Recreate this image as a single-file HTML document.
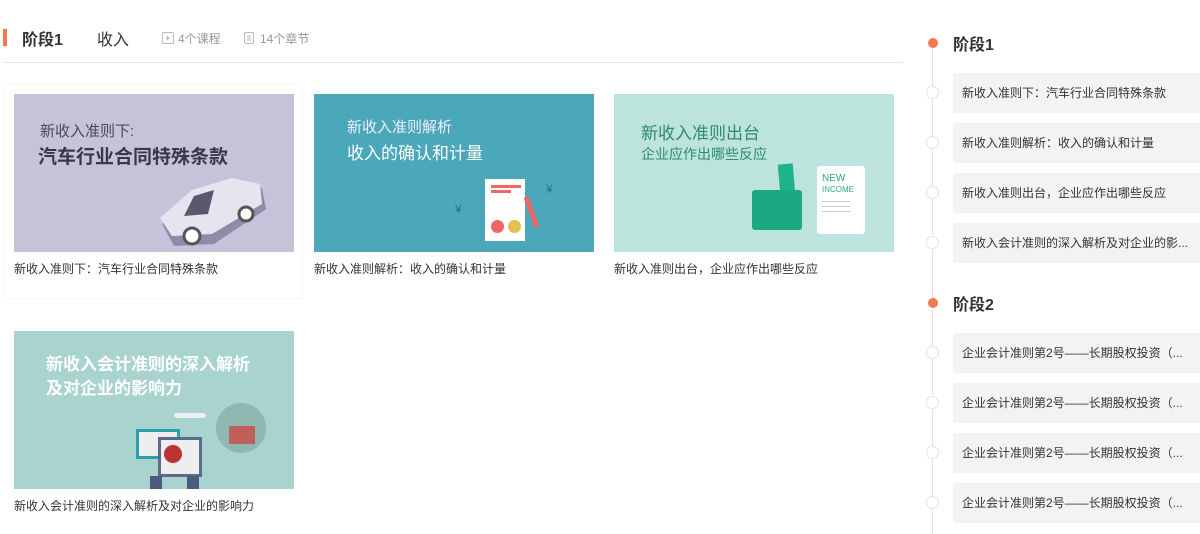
<!DOCTYPE html>
<html><head><meta charset="utf-8"><style>
*{margin:0;padding:0;box-sizing:border-box}
body{width:1200px;height:534px;background:#fff;font-family:"Liberation Sans","Noto Sans CJK SC",sans-serif;position:relative;overflow:hidden;color:#333}
.a{position:absolute}
.cap{position:absolute;font-size:12px;color:#333;white-space:nowrap}
.img{position:absolute;width:280px;height:158px;overflow:hidden}
.t{position:absolute;white-space:nowrap}
.item{position:absolute;left:953px;width:260px;height:40px;background:#f4f3f2;border-radius:3px;font-size:12px;color:#333;line-height:40px;padding-left:9px;white-space:nowrap}
.dot{position:absolute;left:926px;width:13px;height:13px;border:1px solid #e2e2e2;border-radius:50%;background:#fff}
</style></head><body>
<div class="a" style="left:3px;top:29px;width:4px;height:17px;background:#f47a4d"></div>
<div class="t" style="left:22px;top:26px;font-size:16px;font-weight:bold;color:#333">阶段1</div>
<div class="t" style="left:97px;top:26px;font-size:16px;color:#333">收入</div>
<svg class="a" style="left:162px;top:32px" width="12" height="12"><rect x="0.5" y="0.5" width="11" height="11" rx="1.5" fill="none" stroke="#bbb"/><path d="M4.5 3.5L8 6L4.5 8.5Z" fill="#bbb"/></svg>
<div class="t" style="left:178px;top:30px;font-size:12px;color:#999">4个课程</div>
<svg class="a" style="left:244px;top:32px" width="10" height="12"><rect x="0.5" y="0.5" width="9" height="11" rx="1.5" fill="none" stroke="#bbb"/><path d="M3 4h4M3 6h4M3 8h4" stroke="#bbb"/></svg>
<div class="t" style="left:260px;top:30px;font-size:12px;color:#999">14个章节</div>
<div class="a" style="left:3px;top:62px;width:900px;height:1px;background:#e5e5e5"></div>

<div class="a" style="left:3px;top:84px;width:300px;height:215px;border:1px solid #f6f6f6"></div>

<div class="img" style="left:14px;top:94px;background:#c5c3d9">
 <div class="t" style="left:26px;top:26px;font-size:15px;color:#4a4560">新收入准则下:</div>
 <div class="t" style="left:24px;top:48px;font-size:19px;font-weight:bold;color:#3b3550">汽车行业合同特殊条款</div>
 <svg class="a" style="left:140px;top:80px" width="120" height="75"><path d="M8 50 L40 20 L80 8 L108 14 L112 35 L60 70 L20 72Z" fill="#8f8ca8"/><path d="M6 44 L38 16 L78 4 L106 10 L108 30 L58 60 L18 62Z" fill="#e6e5ef"/><path d="M40 22 L60 16 L54 40 L30 42Z" fill="#5a5870"/><circle cx="38" cy="62" r="8" fill="#fff" stroke="#555" stroke-width="3"/><circle cx="92" cy="40" r="7" fill="#fff" stroke="#555" stroke-width="3"/></svg>
</div>
<div class="cap" style="left:14px;top:260px">新收入准则下：汽车行业合同特殊条款</div>

<div class="img" style="left:314px;top:94px;background:#4ba8ba">
 <div class="t" style="left:33px;top:22px;font-size:15px;color:#eef">新收入准则解析</div>
 <div class="t" style="left:33px;top:45px;font-size:17px;color:#fff">收入的确认和计量</div>
 <div class="a" style="left:171px;top:85px;width:40px;height:62px;background:#fff"></div>
 <div class="a" style="left:177px;top:91px;width:30px;height:3px;background:#e66"></div>
 <div class="a" style="left:177px;top:96px;width:20px;height:3px;background:#e66"></div>
 <div class="a" style="left:177px;top:126px;width:13px;height:13px;border-radius:50%;background:#e66"></div>
 <div class="a" style="left:194px;top:126px;width:13px;height:13px;border-radius:50%;background:#e3c04c"></div>
 <div class="a" style="left:215px;top:102px;width:5px;height:32px;background:#e66;transform:rotate(-20deg)"></div>
 <div class="t" style="left:141px;top:108px;font-size:12px;color:#2d7080">¥</div>
 <div class="t" style="left:232px;top:88px;font-size:12px;color:#2d7080">¥</div>
</div>
<div class="cap" style="left:314px;top:260px">新收入准则解析：收入的确认和计量</div>

<div class="img" style="left:614px;top:94px;background:#bde4dc">
 <div class="t" style="left:27px;top:25px;font-size:17px;color:#2f8a72">新收入准则出台</div>
 <div class="t" style="left:27px;top:50px;font-size:14px;color:#2f8a72">企业应作出哪些反应</div>
 <div class="a" style="left:165px;top:70px;width:15px;height:30px;background:#1fb38a;transform:rotate(-5deg)"></div>
 <div class="a" style="left:138px;top:96px;width:50px;height:40px;background:#1aa982;border-radius:3px"></div>
 <div class="a" style="left:203px;top:72px;width:48px;height:68px;background:#fff;border-radius:3px"></div>
 <div class="t" style="left:208px;top:79px;font-size:10px;color:#3a7;line-height:11px">NEW<br><span style="font-size:8px">INCOME</span></div>
 <div class="a" style="left:208px;top:107px;width:28px;height:1px;background:#ccc"></div>
 <div class="a" style="left:208px;top:112px;width:28px;height:1px;background:#ccc"></div>
 <div class="a" style="left:208px;top:117px;width:28px;height:1px;background:#ccc"></div>
</div>
<div class="cap" style="left:614px;top:260px">新收入准则出台，企业应作出哪些反应</div>

<div class="img" style="left:14px;top:331px;background:#a8d3cf">
 <div class="t" style="left:32px;top:19px;font-size:17px;font-weight:bold;color:#fff">新收入会计准则的深入解析</div>
 <div class="t" style="left:32px;top:43px;font-size:17px;font-weight:bold;color:#fff">及对企业的影响力</div>
 <div class="a" style="left:202px;top:72px;width:50px;height:50px;border-radius:50%;background:#8fb8b3"></div>
 <div class="a" style="left:215px;top:95px;width:26px;height:18px;background:#c0605a"></div>
 <div class="a" style="left:160px;top:82px;width:32px;height:5px;border-radius:3px;background:#eee"></div>
 <div class="a" style="left:122px;top:98px;width:44px;height:30px;background:#eee;border:3px solid #2aa0a8"></div>
 <div class="a" style="left:144px;top:106px;width:44px;height:40px;background:#eee;border:3px solid #5a6a88"></div>
 <div class="a" style="left:150px;top:114px;width:18px;height:18px;border-radius:50%;background:#b33"></div>
 <div class="a" style="left:136px;top:145px;width:12px;height:13px;background:#4a5d80"></div>
 <div class="a" style="left:173px;top:145px;width:12px;height:13px;background:#4a5d80"></div>
</div>
<div class="cap" style="left:14px;top:497px">新收入会计准则的深入解析及对企业的影响力</div>

<div class="a" style="left:932px;top:43px;width:1px;height:491px;background:#e5e5e5"></div>
<div class="a" style="left:928px;top:38px;width:10px;height:10px;border-radius:50%;background:#f47a4d"></div>
<div class="t" style="left:953px;top:31px;font-size:16px;font-weight:bold;color:#333">阶段1</div>
<div class="dot" style="top:86px"></div><div class="item" style="top:73px">新收入准则下：汽车行业合同特殊条款</div>
<div class="dot" style="top:136px"></div><div class="item" style="top:123px">新收入准则解析：收入的确认和计量</div>
<div class="dot" style="top:186px"></div><div class="item" style="top:173px">新收入准则出台，企业应作出哪些反应</div>
<div class="dot" style="top:236px"></div><div class="item" style="top:223px">新收入会计准则的深入解析及对企业的影...</div>
<div class="a" style="left:928px;top:298px;width:10px;height:10px;border-radius:50%;background:#f47a4d"></div>
<div class="t" style="left:953px;top:291px;font-size:16px;font-weight:bold;color:#333">阶段2</div>
<div class="dot" style="top:346px"></div><div class="item" style="top:333px">企业会计准则第2号——长期股权投资（...</div>
<div class="dot" style="top:396px"></div><div class="item" style="top:383px">企业会计准则第2号——长期股权投资（...</div>
<div class="dot" style="top:446px"></div><div class="item" style="top:433px">企业会计准则第2号——长期股权投资（...</div>
<div class="dot" style="top:496px"></div><div class="item" style="top:483px">企业会计准则第2号——长期股权投资（...</div>
</body></html>
